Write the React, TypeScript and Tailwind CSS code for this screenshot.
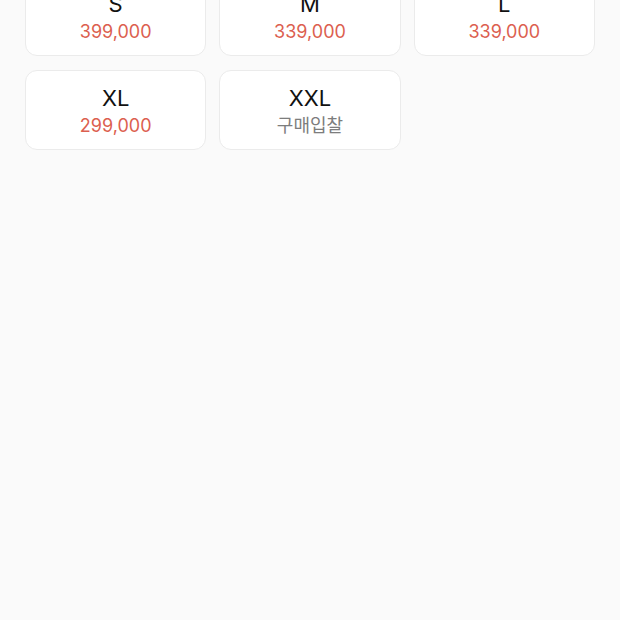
const sizes = [
  { size: "S", price: "399,000" },
  { size: "M", price: "339,000" },
  { size: "L", price: "339,000" },
  { size: "XL", price: "299,000" },
  { size: "XXL", price: null },
];

function SizeCard({ size, price }: { size: string; price: string | null }) {
  return (
    <button
      type="button"
      className="flex h-[80px] flex-col items-center rounded-[12px] border border-[#ebebeb] bg-white pt-[13px]"
    >
      <span className="text-[22px] leading-[28px] text-[#111]">{size}</span>
      {price ? (
        <span className="mt-[2px] text-[18px] leading-[24px] text-[#dc5f50]">{price}</span>
      ) : (
        <span className="mt-[2px] text-[18px] leading-[24px] text-[#7d7d7d]">구매입찰</span>
      )}
    </button>
  );
}

export default function App() {
  return (
    <div
      className="h-[620px] overflow-hidden bg-[#fafafa]"
      style={{ fontFamily: 'Inter, "Noto Sans CJK KR", sans-serif' }}
    >
      <div className="-mt-[24px] grid grid-cols-3 gap-x-[13px] gap-y-[14px] pl-[25px] pr-[25px]">
        {sizes.map((s) => (
          <SizeCard key={s.size} size={s.size} price={s.price} />
        ))}
      </div>
    </div>
  );
}
